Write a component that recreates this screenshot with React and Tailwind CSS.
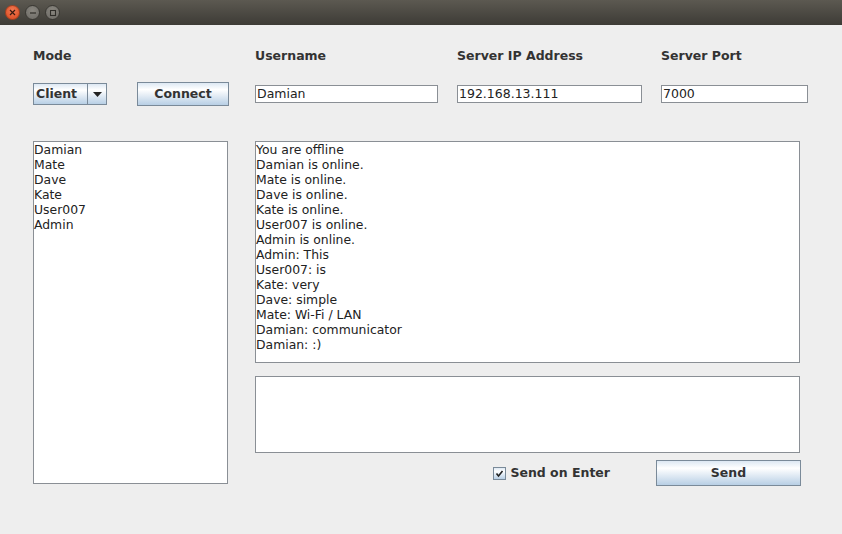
import React from "react";

const font = { fontFamily: '"DejaVu Sans", "Liberation Sans", sans-serif' };

function Circle({ color, children }) {
  return (
    <div
      className={`w-[15px] h-[15px] rounded-full flex items-center justify-center ${color}`}
    >
      {children}
    </div>
  );
}

const btnBg =
  "bg-[linear-gradient(to_bottom,#dde8f3_0%,#ffffff_30%,#b8cfe5_100%)]";

export default function App() {
  const users = ["Damian", "Mate", "Dave", "Kate", "User007", "Admin"];
  const chat = [
    "You are offline",
    "Damian is online.",
    "Mate is online.",
    "Dave is online.",
    "Kate is online.",
    "User007 is online.",
    "Admin is online.",
    "Admin: This",
    "User007: is",
    "Kate: very",
    "Dave: simple",
    "Mate: Wi-Fi / LAN",
    "Damian: communicator",
    "Damian: :)",
  ];
  return (
    <div
      className="w-[842px] h-[534px] bg-[#eeeeee] flex flex-col overflow-hidden text-[#333333]"
      style={font}
    >
      {/* Title bar */}
      <div className="h-[25px] shrink-0 bg-[linear-gradient(to_bottom,#5c5951,#3d3b36)] flex items-center pl-[5px] gap-[5px]">
        <Circle color="bg-[radial-gradient(circle_at_50%_35%,#f27b55,#d9461c)] border border-[#a8401f]">
          <svg width="7" height="7" viewBox="0 0 7 7">
            <path d="M1 1L6 6M6 1L1 6" stroke="#3a1a10" strokeWidth="1.2" />
          </svg>
        </Circle>
        <Circle color="bg-[radial-gradient(circle_at_50%_35%,#8a8780,#6b6964)] border border-[#3a3833]">
          <svg width="8" height="8" viewBox="0 0 8 8">
            <path d="M1 4H7" stroke="#2f2d29" strokeWidth="1.2" />
          </svg>
        </Circle>
        <Circle color="bg-[radial-gradient(circle_at_50%_35%,#8a8780,#6b6964)] border border-[#3a3833]">
          <svg width="8" height="8" viewBox="0 0 8 8">
            <rect x="1.5" y="1.5" width="5" height="5" fill="none" stroke="#2f2d29" strokeWidth="1.1" />
          </svg>
        </Circle>
      </div>

      {/* Content */}
      <div className="pl-[33px] pt-[23px] flex flex-col">
        {/* Labels */}
        <div className="flex h-[16px] items-center text-[12.5px] font-bold leading-[16px]">
          <div className="w-[222px]">Mode</div>
          <div className="w-[202px]">Username</div>
          <div className="w-[204px]">Server IP Address</div>
          <div className="w-[147px]">Server Port</div>
        </div>

        {/* Controls */}
        <div className="flex h-[24px] items-center mt-[18px]">
          <div className="w-[104px] flex">
            <div className="w-[74px] h-[22px] border border-[#7a8a99] flex">
              <div className={`flex-1 ${btnBg} flex items-center pl-[2px] text-[12.5px] font-bold border-r border-[#7a8a99]`}>
                Client
              </div>
              <div className={`w-[18px] ${btnBg} flex items-center justify-center`}>
                <svg width="9" height="5" viewBox="0 0 9 5">
                  <path d="M0 0H9L4.5 5Z" fill="#222" />
                </svg>
              </div>
            </div>
          </div>
          <div className="w-[118px]">
            <div className={`w-[92px] h-[24px] border border-[#7a8a99] ${btnBg} flex items-center justify-center text-[12.5px] font-bold`}>
              Connect
            </div>
          </div>
          <div className="w-[202px]">
            <div className="w-[183px] h-[18px] bg-white border border-[#8a8f95] pl-[1px] flex items-center text-[12.5px] text-[#222]">
              Damian
            </div>
          </div>
          <div className="w-[204px]">
            <div className="w-[185px] h-[18px] bg-white border border-[#8a8f95] pl-[1px] flex items-center text-[12.5px] text-[#222]">
              192.168.13.111
            </div>
          </div>
          <div className="w-[147px]">
            <div className="w-[147px] h-[18px] bg-white border border-[#8a8f95] pl-[1px] flex items-center text-[12.5px] text-[#222]">
              7000
            </div>
          </div>
        </div>

        {/* Panels */}
        <div className="flex mt-[35px]">
          <div className="w-[195px] h-[343px] bg-white border border-[#8a8f95] text-[12.4px] leading-[15px] text-[#222]">
            {users.map((u) => (
              <div key={u} className="h-[15px]">{u}</div>
            ))}
          </div>
          <div className="ml-[27px] w-[546px] flex flex-col">
            <div className="w-[545px] h-[222px] bg-white border border-[#8a8f95] text-[12.4px] leading-[15px] text-[#222]">
              {chat.map((c, i) => (
                <div key={i} className="h-[15px] whitespace-pre">{c}</div>
              ))}
            </div>
            <div className="w-[545px] h-[77px] mt-[13px] bg-white border border-[#8a8f95]" />
            <div className="mt-[7px] h-[26px] flex items-center justify-end">
              <div className="flex items-center">
                <div className={`w-[13px] h-[13px] border border-[#7a8a99] ${btnBg} flex items-center justify-center`}>
                  <svg width="9" height="9" viewBox="0 0 9 9">
                    <path d="M1.5 4.5L3.5 7L7.5 2" fill="none" stroke="#222" strokeWidth="1.6" />
                  </svg>
                </div>
                <div className="ml-[4px] text-[12.5px] font-bold">Send on Enter</div>
              </div>
              <div className={`ml-[46px] w-[145px] h-[26px] border border-[#7a8a99] ${btnBg} flex items-center justify-center text-[12.5px] font-bold`}>
                Send
              </div>
            </div>
          </div>
        </div>
      </div>
    </div>
  );
}
